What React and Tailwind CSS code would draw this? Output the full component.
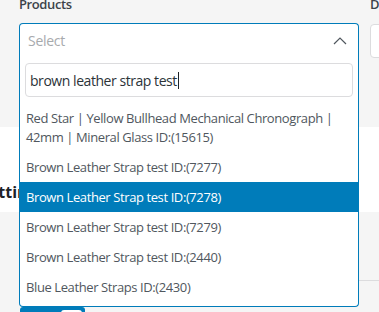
import React from 'react';

const options = [
  { id: 15615, lines: ['Red Star | Yellow Bullhead Mechanical Chronograph |', '42mm | Mineral Glass ID:(15615)'] },
  { id: 7277, lines: ['Brown Leather Strap test ID:(7277)'] },
  { id: 7278, lines: ['Brown Leather Strap test ID:(7278)'], active: true },
  { id: 7279, lines: ['Brown Leather Strap test ID:(7279)'] },
  { id: 2440, lines: ['Brown Leather Strap test ID:(2440)'] },
  { id: 2430, lines: ['Blue Leather Straps ID:(2430)'] },
];

const ChevronUp = () => (
  <svg width="14" height="8" viewBox="0 0 14 8" fill="none">
    <polyline points="1,7 7,1 13,7" stroke="#50575e" strokeWidth="1.2" />
  </svg>
);

const App = () => {
  return (
    <div
      className="w-[379px] h-[312px] overflow-hidden bg-[#f5f5f5] text-[#2c3338]"
      style={{ fontFamily: '"Open Sans", "Noto Sans", sans-serif' }}
    >
      {/* filter card */}
      <div className="h-[127px] pl-[19px] flex gap-[11px]">
        <div className="w-[340px] shrink-0">
          <div className="-mt-[5px] h-[28px] leading-[18px] text-[13px] tracking-[-0.4px] font-semibold text-[#3c434a]">Products</div>
          <div className="relative">
            <div className="h-[34px] bg-white border border-b-0 border-[#007cba] rounded-t-[4px] flex items-center justify-between pl-[8px] pr-[11px]">
              <span className="text-[14px] tracking-[-0.3px] text-[#a7aaad]">Select</span>
              <ChevronUp />
            </div>
            <div className="absolute top-full left-0 right-0 z-10 bg-white border border-t-0 border-[#007cba] rounded-b-[4px] pb-[4px]">
              <div className="mx-[5px] mt-[6px] h-[34px] border border-[#dcdcde] rounded-[4px] flex items-center pl-[4px] text-[14px] tracking-[-0.45px] text-[#2c3338]">
                brown leather strap test<span className="ml-[1px] w-px h-[17px] bg-[#1d2327]" />
              </div>
              <ul className="mt-[6px] text-[13px] tracking-[-0.4px]">
                {options.map((o) => (
                  <li
                    key={o.id}
                    className={
                      'px-[6px] pt-[6px] pb-[5px] leading-[19px] whitespace-nowrap ' +
                      (o.active ? 'bg-[#007cba] text-white' : 'text-[#50575e]')
                    }
                  >
                    {o.lines.map((l, i) => (
                      <div key={i}>{l}</div>
                    ))}
                  </li>
                ))}
              </ul>
            </div>
          </div>
        </div>
        <div className="w-[120px] shrink-0">
          <div className="-mt-[5px] h-[29px] leading-[18px] text-[13px] font-semibold text-[#3c434a]">Date</div>
          <div className="h-[34px] bg-white border border-[#dcdcde] rounded-[4px]" />
        </div>
      </div>

      {/* settings heading */}
      <div className="h-[85px] bg-white pt-[55px]">
        <h2 className="-ml-[20px] text-[16px] leading-[20px] font-bold text-[#1d2327]">Settings</h2>
      </div>

      {/* settings rows */}
      <div className="h-[100px] bg-[#f5f5f5]">
        <div className="h-[68px]" />
        <div className="ml-[20px] border-t border-[#dcdcde]" />
        <div className="ml-[20px] mt-[26px] w-[65px] h-[26px] bg-[#007cba] rounded-[3px] flex items-center justify-between px-[3px]">
          <span className="pl-[10px] text-[10px] font-bold text-white">YES</span>
          <span className="w-[21px] h-[20px] bg-white rounded-[3px]" />
        </div>
      </div>
    </div>
  );
};

export default App;
